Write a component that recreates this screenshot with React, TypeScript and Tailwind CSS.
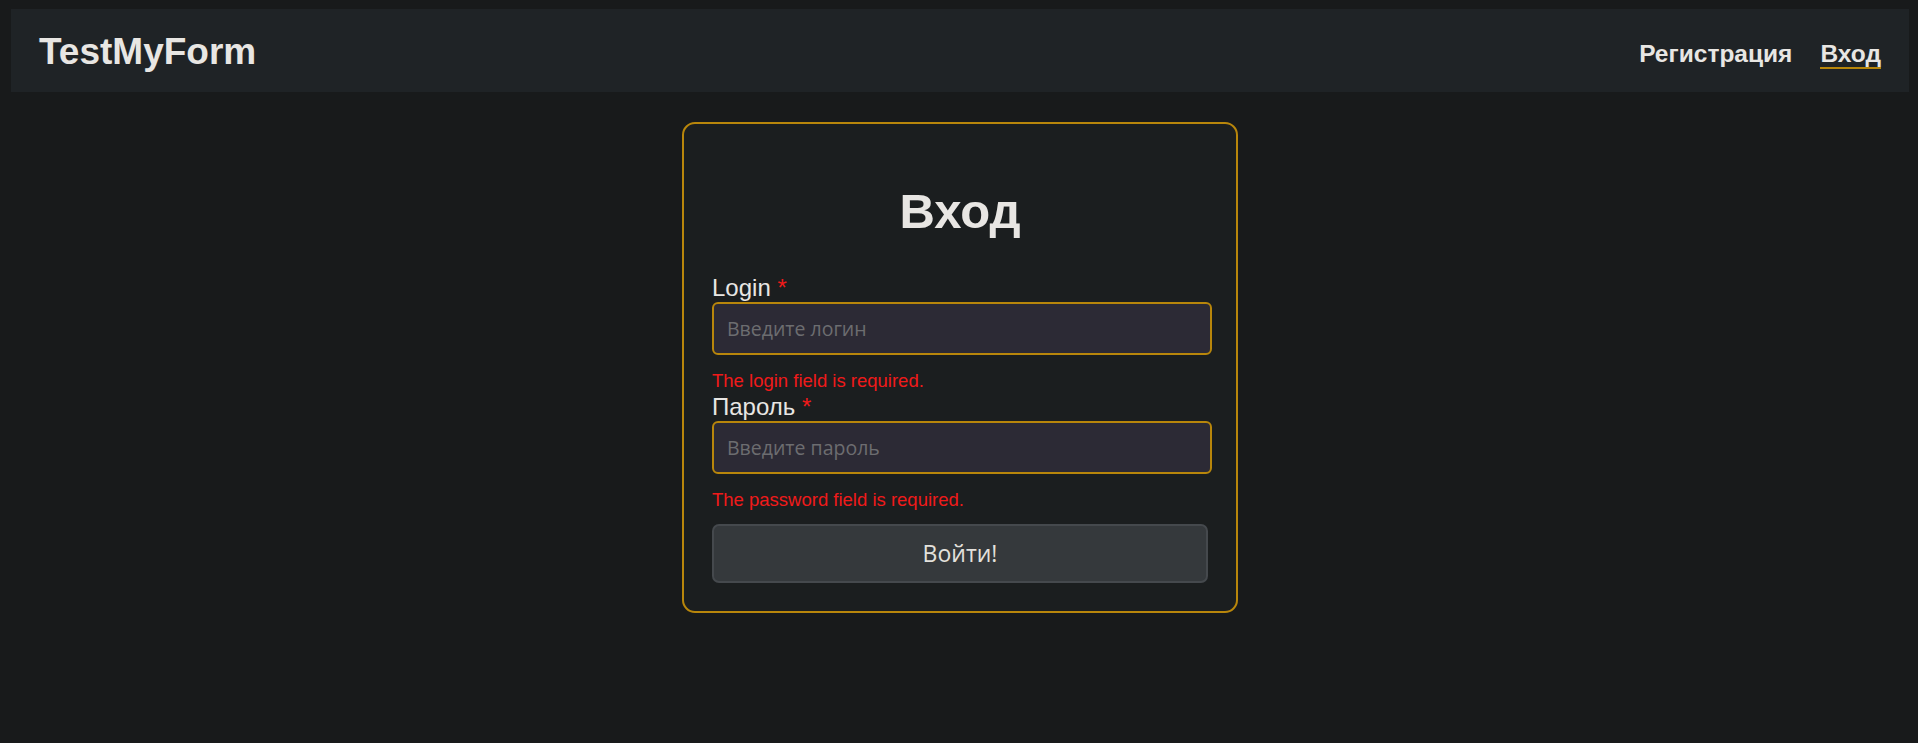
import { useState } from 'react';

const sans = { fontFamily: '"Liberation Sans", Arial, sans-serif' };

function Header() {
  return (
    <header className="ml-[11px] mr-[9px] h-[83px] bg-[#1f2326] flex items-center justify-between px-7">
      <a href="#" className="text-[37px] leading-[41px] font-bold text-[#e8e6e3] pt-[2px]">
        TestMyForm
      </a>
      <nav className="flex items-center gap-7 mt-[7px]">
        <a href="#" className="text-[24.5px] leading-[27px] font-bold text-[#e8e6e3] border-b-2 border-transparent">
          Регистрация
        </a>
        <a href="#" className="text-[24.5px] leading-[27px] font-bold text-[#e8e6e3] border-b-2 border-[#b8860b]">
          Вход
        </a>
      </nav>
    </header>
  );
}

export default function App() {
  const [login, setLogin] = useState('');
  const [password, setPassword] = useState('');

  return (
    <div className="min-h-screen bg-[#181a1b] pt-[9px]" style={sans}>
      <Header />

      <div className="flex justify-center pl-[2px] mt-[30px]">
        <form
          className="w-[556px] border-2 border-[#b8860b] rounded-[13px] bg-[#1b1e1f] pt-[59px] pb-[28px] px-[28px]"
          onSubmit={(e) => e.preventDefault()}
        >
          <h1 className="text-center text-[49px] leading-[56px] font-bold text-[#e8e6e3] mb-[34px]">
            Вход
          </h1>

          {/* Логин */}
          <label className="block text-[24px] leading-[29px] text-[#e8e6e3]">
            Login <span className="text-[#f01a1a]">*</span>
          </label>
          <input
            value={login}
            onChange={(e) => setLogin(e.target.value)}
            placeholder="Введите логин"
            className="block w-[500px] h-[53px] border-2 border-[#b8860b] rounded-[6px] bg-[#2c2a35] px-[13px] text-[19.5px] text-[#e8e6e3] font-['Open_Sans',sans-serif] placeholder:text-[#6c6d70] outline-none"
          />
          <div className="mt-[15px] text-[18.5px] leading-[22px] text-[#f01a1a]">
            The login field is required.
          </div>

          {/* Пароль */}
          <label className="block text-[24px] leading-[29px] text-[#e8e6e3]">
            Пароль <span className="text-[#f01a1a]">*</span>
          </label>
          <input
            type="password"
            value={password}
            onChange={(e) => setPassword(e.target.value)}
            placeholder="Введите пароль"
            className="block w-[500px] h-[53px] border-2 border-[#b8860b] rounded-[6px] bg-[#2c2a35] px-[13px] text-[19.5px] text-[#e8e6e3] font-['Open_Sans',sans-serif] placeholder:text-[#6c6d70] outline-none"
          />
          <div className="mt-[15px] text-[18.5px] leading-[22px] text-[#f01a1a]">
            The password field is required.
          </div>

          <button
            type="submit"
            className="block mt-[13px] w-[496px] h-[59px] bg-[#35393c] border-2 border-[#45494d] rounded-[7px] text-[23px] text-[#e3e1dc] font-['Open_Sans',sans-serif]"
          >
            Войти!
          </button>
        </form>
      </div>
    </div>
  );
}
